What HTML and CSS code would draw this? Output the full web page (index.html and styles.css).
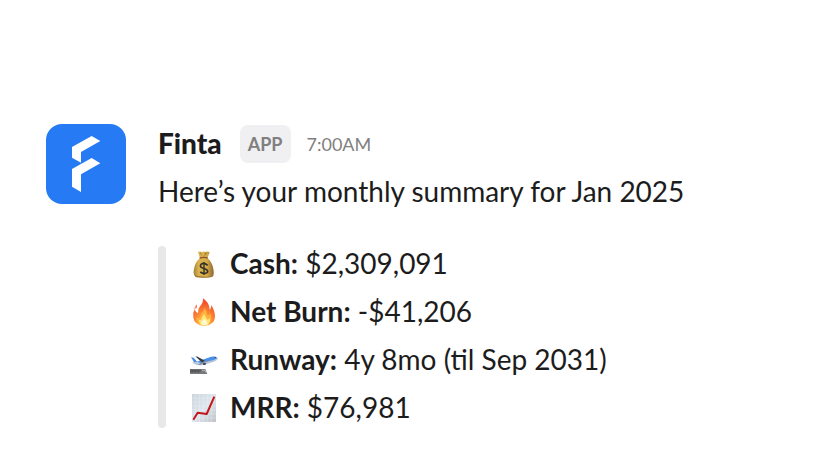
FILE: index.html
```html
<!DOCTYPE html>
<html lang="en">
<head>
<meta charset="utf-8">
<meta name="viewport" content="width=device-width, initial-scale=1">
<title>Finta</title>
<link rel="stylesheet" href="styles.css">
</head>
<body>
<article class="message">
  <svg class="avatar" viewBox="18 18 240 240" role="img" aria-label="Finta">
    <rect x="18" y="18" width="240" height="240" rx="48" fill="#267bf4"/>
    <path fill="#fff" d="M96 87 155 54 181 69 123 102V134L96 119ZM96 153 155 120 181 136 123 169V222L96 206Z"/>
  </svg>
  <div class="body">
    <header class="meta">
      <strong class="name">Finta</strong>
      <span class="badge">APP</span>
      <time class="time" datetime="07:00">7:00AM</time>
    </header>
    <p class="summary">Here’s your monthly summary for Jan 2025</p>
    <ul class="stats">
      <li class="stat">
        <svg class="icon" viewBox="18 18 84 84" aria-hidden="true">
          <defs>
            <linearGradient id="bag" x1="0" x2="1" y1="0" y2="0">
              <stop offset="0" stop-color="#a1803a"/><stop offset=".25" stop-color="#dcb44e"/>
              <stop offset=".65" stop-color="#d6ae48"/><stop offset="1" stop-color="#8d6432"/>
            </linearGradient>
          </defs>
          <path fill="url(#bag)" d="M42 24Q48 21 54 25Q59 20 64 24Q70 20 77 25L70 42Q84 53 88 75Q92 96 84 99Q60 104 35 99Q26 95 30 75Q34 53 48 42Z"/>
          <path fill="#9c773a" d="M50 25 54 38 48 27ZM64 25 60 39 69 26ZM33 94Q60 102 85 95L83 99Q60 103 35 99Z"/>
          <path fill="none" stroke="#8e5030" stroke-width="4" d="M47 42Q60 38 71 42"/>
          <path fill="none" stroke="#33332c" stroke-width="5" d="M71 64Q60 54 51 61Q46 69 56 72L64 75Q75 80 69 86Q60 92 49 84"/>
          <path stroke="#33332c" stroke-width="4" d="M60 54V93"/>
        </svg>
        <span class="text"><strong>Cash:</strong> $2,309,091</span>
      </li>
      <li class="stat">
        <svg class="icon" viewBox="18 18 84 84" aria-hidden="true">
          <defs>
            <radialGradient id="flame" cx=".5" cy=".9" r=".75">
              <stop offset="0" stop-color="#ffe08a"/><stop offset=".4" stop-color="#ff9b38"/>
              <stop offset="1" stop-color="#f4512c"/>
            </radialGradient>
          </defs>
          <path fill="url(#flame)" d="M57 19Q76 31 77 53Q82 49 82 39Q94 59 93 76Q91 98 62 102Q30 100 28 76Q26 61 32 52Q34 61 42 63Q41 51 48 43Q58 33 57 19Z"/>
          <path fill="#f5735b" d="M38 37Q41 44 36 51Q30 47 38 37ZM29 47 32 48 30 53Z"/>
          <path fill="#ffb13c" d="M62 46Q69 61 70 70Q76 72 80 64Q87 99 62 101Q36 99 37 76Q43 80 49 76Q49 65 56 59Q62 54 62 46Z"/>
          <path fill="#ffe477" d="M61 65Q65 77 71 83L78 78Q80 99 62 101Q43 99 45 83L52 84Q51 76 61 65Z"/>
          <path fill="#fff9cf" d="M61 80Q71 87 71 95Q63 104 53 96Q51 88 61 80Z"/>
        </svg>
        <span class="text"><strong>Net Burn:</strong> -$41,206</span>
      </li>
      <li class="stat">
        <svg class="icon" viewBox="18 18 84 84" aria-hidden="true">
          <path fill="#4b8ee8" d="M21 52 29 53 40 66 31 68Z"/>
          <path fill="#b8c5d5" d="M24 67 43 67 77 53Q96 47 102 55Q101 62 87 66L58 75Q42 78 30 71Z"/>
          <path fill="#4990ec" d="M38 65 73 53Q91 46 99 53Q95 59 79 62L51 69Z"/>
          <path fill="#343a43" d="M34 49 41 50 65 64 56 69Q46 61 34 49Z"/>
          <path fill="#7b8ca5" d="M61 63 77 61 48 75 42 74Z"/>
          <path fill="#303b4c" d="M90 51 97 52 94 55ZM57 70 66 69 64 75 58 75Z"/>
          <path fill="#77797a" d="M18 87H64L70 102H18Z"/>
          <path fill="#4a4c4e" d="M18 89H51L48 97H18Z"/>
          <path fill="none" stroke="#d6d6d6" stroke-width="2" d="M54 91H63L66 98"/>
          <path stroke="#8d8f90" stroke-width="2" stroke-dasharray="5 3" d="M20 93H48"/>
        </svg>
        <span class="text"><strong>Runway:</strong> 4y 8mo (til Sep 2031)</span>
      </li>
      <li class="stat">
        <svg class="icon" viewBox="18 18 84 84" aria-hidden="true">
          <defs>
            <linearGradient id="sheet" x1="0" x2="1" y1="0" y2="1">
              <stop offset="0" stop-color="#ccd5dc"/><stop offset=".5" stop-color="#dde6ee"/>
              <stop offset="1" stop-color="#bfc3c8"/>
            </linearGradient>
          </defs>
          <path fill="url(#sheet)" d="M24 18H96V102H24Z"/>
          <path fill="none" stroke="#f0f4f7" stroke-width="1" d="M34 18V102M46 18V102M58 18V102M70 18V102M82 18V102M24 30H96M24 42H96M24 54H96M24 66H96M24 78H96M24 90H96"/>
          <path fill="none" stroke="#c4161b" stroke-width="6" stroke-linejoin="round" d="M28 95 41 74 68 78 91 26"/>
        </svg>
        <span class="text"><strong>MRR:</strong> $76,981</span>
      </li>
    </ul>
  </div>
</article>
</body>
</html>
```
FILE: styles.css
```css
* {
  box-sizing: border-box;
}

body {
  margin: 0;
  background: #fff;
  color: #1d1c1d;
  font-family: Lato, "Liberation Sans", sans-serif;
  font-size: 28px;
  line-height: 34px;
}

.message {
  display: flex;
  gap: 32px;
  padding: 124px 46px 46px;
}

.avatar {
  flex: none;
  width: 80px;
  height: 80px;
}

.body {
  flex: 1;
  min-width: 0;
}

.meta {
  display: flex;
  align-items: center;
  height: 40px;
}

.name {
  align-self: flex-start;
  margin-right: 18px;
  font-weight: 900;
  line-height: 38px;
}

.badge {
  margin-right: 16px;
  padding: 0 8px;
  border-radius: 8px;
  background: #f0f0f2;
  color: #808080;
  font-size: 18px;
  font-weight: 700;
  line-height: 38px;
}

.time {
  color: #808080;
  font-size: 18px;
}

.summary {
  margin: 10px 0 38px;
}

.stats {
  position: relative;
  display: flex;
  flex-direction: column;
  gap: 12px;
  margin: 0;
  padding: 0 0 2px 32px;
  list-style: none;
}

.stats::before {
  content: "";
  position: absolute;
  inset: 0 auto 0 0;
  width: 8px;
  border-radius: 4px;
  background: #e8e8e8;
}

.stat {
  display: flex;
  align-items: center;
  gap: 12px;
  min-height: 36px;
}

.text {
  align-self: flex-start;
}

.icon {
  flex: none;
  width: 28px;
  height: 28px;
}
```
